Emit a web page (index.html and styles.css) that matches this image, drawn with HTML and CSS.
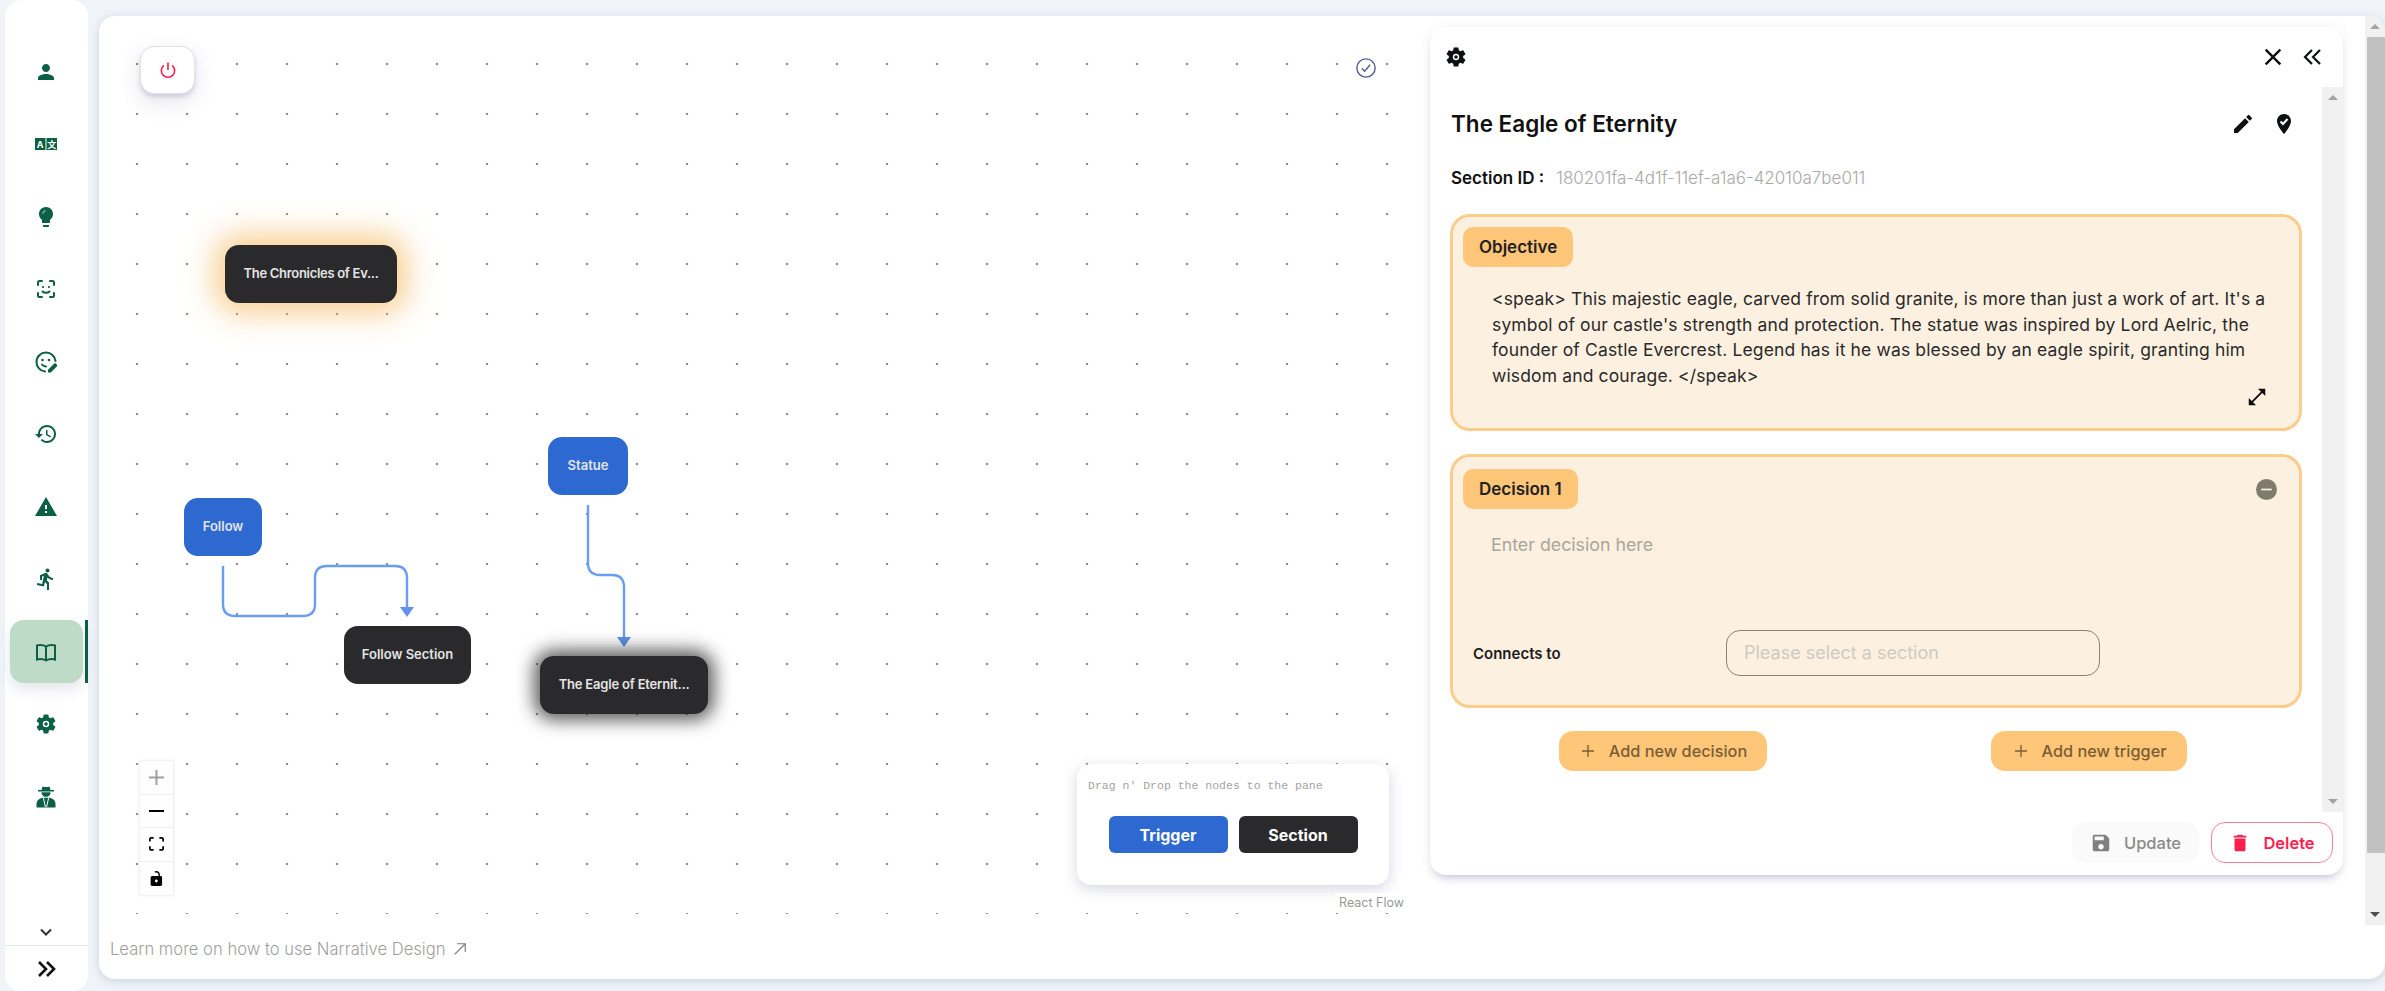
FILE: index.html
```html
<!DOCTYPE html>
<html lang="en">

<head>
  <meta charset="UTF-8">
  <title>Narrative Design</title>
  <link rel="stylesheet" href="styles.css">
</head>

<body>
  <aside class="sidebar">
    <nav class="side-nav">
      <a class="side-item"><svg viewBox="0 0 24 24"><path d="M12 12c2.21 0 4-1.79 4-4s-1.79-4-4-4-4 1.790-4 4 1.790 4 4 4zm0 2c-2.670 0-8 1.340-8 4v2h16v-2c0-2.660-5.330-4-8-4z"/></svg></a>
      <a class="side-item"><svg viewBox="0 0 24 24"><rect x="1" y="6" width="10.500" height="12"/><rect x="12.500" y="6" width="10.500" height="12"/><text class="mini-a" x="6.200" y="15.500">A</text><text class="mini-b" x="17.700" y="15.500">文</text></svg></a>
      <a class="side-item"><svg viewBox="0 0 24 24"><path d="M9 21c0 .55.45 1 1 1h4c.55 0 1-.45 1-1v-1H9v1zm3-19C8.140 2 5 5.140 5 9c0 2.380 1.190 4.470 3 5.740V17c0 .55.45 1 1 1h6c.55 0 1-.45 1-1v-2.260c1.810-1.270 3-3.360 3-5.740 0-3.860-3.140-7-7-7z"/><path class="hole-line" d="M9 8c.3-1.200 1-1.900 2-2.300"/></svg></a>
      <a class="side-item"><svg viewBox="0 0 24 24"><path class="line" d="M8 4H5.500C4.700 4 4 4.700 4 5.500V8M16 4h2.500c.8 0 1.500.7 1.500 1.500V8M4 16v2.500c0 .8.7 1.500 1.500 1.500H8M20 16v2.500c0 .8-.7 1.500-1.500 1.500H16M8.500 14.500c1.800 1.800 5.200 1.800 7 0"/><circle cx="9" cy="10" r="1.100"/><circle cx="15" cy="10" r="1.100"/></svg></a>
      <a class="side-item"><svg viewBox="0 0 24 24"><path class="line" d="M11 21.500C6 21 2.500 17 2.500 12c0-5.300 4.300-9.500 9.500-9.500 5 0 9 3.700 9.500 8.500"/><circle cx="8.500" cy="10" r="1.300"/><circle cx="15" cy="10" r="1.300"/><path class="line" d="M8 14.500c1 1.300 2.300 2 4 2"/><path d="M14 22.500v-2.800l6-6c.6-.6 1.500-.6 2 0l.8.8c.6.6.6 1.400 0 2l-6 6z"/></svg></a>
      <a class="side-item"><svg viewBox="0 0 24 24"><path d="M13 3c-4.970 0-9 4.030-9 9H1l3.890 3.890.07.14L9 12H6c0-3.870 3.130-7 7-7s7 3.130 7 7-3.130 7-7 7c-1.930 0-3.680-.79-4.940-2.060l-1.420 1.420C8.270 19.990 10.510 21 13 21c4.970 0 9-4.030 9-9s-4.030-9-9-9zm-1 5v5l4.280 2.540.72-1.210-3.500-2.080V8H12z"/></svg></a>
      <a class="side-item"><svg viewBox="0 0 24 24"><path d="M1 21h22L12 2 1 21zm12-3h-2v-2h2v2zm0-4h-2v-4h2v4z"/></svg></a>
      <a class="side-item"><svg viewBox="0 0 24 24"><path d="M13.490 5.480c1.100 0 2-.9 2-2s-.9-2-2-2-2 .9-2 2 .9 2 2 2zm-3.600 13.900l1-4.400 2.100 2v6h2v-7.500l-2.100-2 .6-3c1.300 1.500 3.300 2.500 5.500 2.500v-2c-1.900 0-3.500-1-4.300-2.400l-1-1.600c-.4-.6-1-1-1.700-1-.3 0-.5.1-.8.1l-5.200 2.200v4.700h2v-3.400l1.800-.7-1.600 8.100-4.900-1-.4 2 7 1.400z"/></svg></a>
      <a class="side-item active"><svg viewBox="0 0 24 24"><path class="line" d="M12 6.500C10.500 5.300 8.400 5 6 5c-1.100 0-2.200.1-3 .4v14.100c.9-.3 2-.5 3-.5 2.300 0 4.500.4 6 1.500 1.500-1.100 3.700-1.500 6-1.500 1 0 2.100.2 3 .5V5.400C20.200 5.100 19.100 5 18 5c-2.400 0-4.500.3-6 1.500zM12 6.500v14"/></svg></a>
      <a class="side-item"><svg viewBox="0 0 24 24"><path d="M19.140 12.940c.04-.3.06-.61.06-.94 0-.32-.02-.64-.07-.94l2.030-1.580c.18-.14.23-.41.12-.61l-1.920-3.320c-.12-.22-.37-.29-.59-.22l-2.390.96c-.5-.38-1.030-.7-1.620-.94l-.36-2.540c-.04-.24-.24-.41-.48-.41h-3.840c-.24 0-.43.17-.47.41l-.36 2.540c-.59.24-1.130.57-1.620.94l-2.390-.96c-.22-.08-.47 0-.59.22L2.740 8.870c-.12.21-.08.47.12.61l2.030 1.580c-.05.3-.09.63-.09.94s.02.64.07.94l-2.030 1.580c-.18.14-.23.41-.12.61l1.920 3.320c.12.22.37.29.59.22l2.390-.96c.5.38 1.030.7 1.620.94l.36 2.540c.05.24.24.41.48.41h3.840c.24 0 .44-.17.47-.41l.36-2.540c.59-.24 1.130-.56 1.620-.94l2.390.96c.22.08.47 0 .59-.22l1.920-3.320c.12-.22.07-.47-.12-.61l-2.010-1.580z"/><circle class="hole" cx="12" cy="12" r="3.200"/><circle cx="12" cy="12" r="1.800"/></svg></a>
      <a class="side-item"><svg viewBox="0 0 24 24"><path d="M8.500 1.500c1 .4 2.200.6 3.500.6s2.500-.2 3.500-.6l1 3.500H20v1.400H4V5h3.500z"/><path d="M7.500 7.300h9c.1 2.400-1.700 4.500-4.500 4.500s-4.600-2.100-4.500-4.500z"/><path d="M2.500 22.500v-3.500c0-3 2.200-5.200 5.500-6.200h8c3.300 1 5.500 3.200 5.500 6.200v3.500z"/><path class="hole-line" d="M9.500 13.500l1.800 8M14.500 13.500l-1.800 8"/></svg></a>
    </nav>
    <div class="side-more"><svg viewBox="0 0 24 24"><path d="M6 9l6 6 6-6"/></svg></div>
    <div class="side-expand"><svg viewBox="0 0 24 24"><path d="M5 5l7 7-7 7M13 5l7 7-7 7"/></svg></div>
  </aside>

  <main class="main-card">
    <div class="main-content">
      <div class="work-row">
        <section class="canvas">
          <button class="power-btn"><svg viewBox="0 0 24 24"><path d="M12 3v9M7 6.500a8 8 0 1 0 10 0"/></svg></button>
          <svg class="status-icon" viewBox="0 0 24 24"><circle cx="12" cy="12" r="10"/><path d="M7.500 12.500l3 3 6-7"/></svg>

          <svg class="edges" viewBox="0 0 1331 898">
            <path d="M124 550v38q0 12 12 12h68q12 0 12-12v-26q0-12 12-12h68q12 0 12 12v30"/>
            <path d="M489 489v58q0 12 12 12h12q12 0 12 12v57"/>
            <polygon points="301,591 315,591 308,601"/>
            <polygon points="518,621 532,621 525,631"/>
          </svg>

          <div class="node dark glow-orange node-chronicles">The Chronicles of Ev...</div>
          <div class="node blue node-statue">Statue</div>
          <div class="node blue node-follow">Follow</div>
          <div class="node dark node-section">Follow Section</div>
          <div class="node dark glow-black node-eagle">The Eagle of Eternit...</div>

          <div class="controls">
            <button class="ctrl-btn"><svg class="ctrl-plus" viewBox="0 0 32 32"><path d="M32 18.100H18.100V32h-4.300V18.100H0v-4.300h13.800V0h4.300v13.800H32z"/></svg></button>
            <button class="ctrl-btn"><svg viewBox="0 0 32 5"><path d="M0 0h32v4.200H0z"/></svg></button>
            <button class="ctrl-btn"><svg viewBox="0 0 32 30"><path d="M3.692 4.630c0-.53.4-.938.939-.938h5.215V0H4.708C2.130 0 0 2.054 0 4.630v5.216h3.692V4.631zM27.354 0h-5.200v3.692h5.170c.53 0 .984.4.984.939v5.215H32V4.631A4.624 4.624 0 0027.354 0zm.954 24.830c0 .532-.4.940-.939.940h-5.215v3.768h5.215c2.577 0 4.631-2.130 4.631-4.707v-5.139h-3.692v5.139zm-23.677.940c-.531 0-.939-.4-.939-.940v-5.138H0v5.139c0 2.577 2.130 4.707 4.708 4.707h5.138V25.770H4.631z"/></svg></button>
            <button class="ctrl-btn"><svg viewBox="0 0 25 32"><path d="M21.333 10.667H19.810V7.619C19.810 3.429 16.380 0 12.190 0c-1.500 0-3 .4-4.200 1.300l1.600 2.500c.8-.5 1.700-.8 2.600-.8 2.514 0 4.572 2.057 4.572 4.571v3.048H3.048C1.370 10.667 0 12.038 0 13.714v15.238C0 30.629 1.371 32 3.048 32h18.285c1.676 0 3.048-1.371 3.048-3.048V13.714c0-1.676-1.372-3.047-3.048-3.047zM12.190 24.381c-1.677 0-3.047-1.371-3.047-3.048 0-1.676 1.370-3.047 3.047-3.047 1.677 0 3.048 1.371 3.048 3.047 0 1.677-1.371 3.048-3.048 3.048z"/></svg></button>
          </div>

          <div class="legend">
            <p class="legend-hint">Drag n' Drop the nodes to the pane</p>
            <div class="legend-btns">
              <button class="legend-btn trigger">Trigger</button>
              <button class="legend-btn section">Section</button>
            </div>
          </div>
          <div class="attribution">React Flow</div>
        </section>

        <section class="panel">
          <header class="panel-head">
            <svg class="icon" viewBox="0 0 24 24"><path d="M19.140 12.940c.04-.3.06-.61.06-.94 0-.32-.02-.64-.07-.94l2.030-1.580c.18-.14.23-.41.12-.61l-1.920-3.320c-.12-.22-.37-.29-.59-.22l-2.390.96c-.5-.38-1.030-.7-1.620-.94l-.36-2.540c-.04-.24-.24-.41-.48-.41h-3.840c-.24 0-.43.17-.47.41l-.36 2.540c-.59.24-1.130.57-1.620.94l-2.390-.96c-.22-.08-.47 0-.59.22L2.740 8.870c-.12.21-.08.47.12.61l2.030 1.580c-.05.3-.09.63-.09.94s.02.64.07.94l-2.030 1.580c-.18.14-.23.41-.12.61l1.920 3.320c.12.22.37.29.59.22l2.390-.96c.5.38 1.030.7 1.620.94l.36 2.540c.05.24.24.41.48.41h3.840c.24 0 .44-.17.47-.41l.36-2.540c.59-.24 1.130-.56 1.620-.94l2.390.96c.22.08.47 0 .59-.22l1.920-3.320c.12-.22.07-.47-.12-.61l-2.010-1.580z"/><circle class="hole" cx="12" cy="12" r="3.200"/><circle cx="12" cy="12" r="1.800"/></svg>
            <div class="head-actions">
              <svg class="icon close" viewBox="0 0 24 24"><path d="M19 6.410L17.590 5 12 10.590 6.410 5 5 6.410 10.590 12 5 17.590 6.410 19 12 13.410 17.590 19 19 17.590 13.410 12 19 6.410z"/></svg>
              <svg class="icon stroke" viewBox="0 0 24 24"><path d="M12 5l-7 7 7 7M20 5l-7 7 7 7"/></svg>
            </div>
          </header>

          <div class="panel-scroll">
            <div class="panel-body">
              <div class="title-row">
                <h2 class="title">The Eagle of Eternity</h2>
                <div class="title-actions">
                  <svg class="icon" viewBox="0 0 24 24"><path d="M3 17.250V21h3.750L17.810 9.940l-3.750-3.750L3 17.250zM20.710 7.040c.39-.39.39-1.020 0-1.410l-2.340-2.340c-.39-.39-1.020-.39-1.410 0l-1.830 1.830 3.750 3.750 1.830-1.830z"/></svg>
                  <svg class="icon" viewBox="0 0 24 24"><path d="M12 2C8.100 2 5 5.100 5 9c0 5.200 7 13 7 13s7-7.800 7-13c0-3.900-3.100-7-7-7z"/><path class="hole-line" d="M8.500 9.500l2.500 2.500 4.500-5"/></svg>
                </div>
              </div>
              <div class="section-id"><strong>Section ID :</strong><span>180201fa-4d1f-11ef-a1a6-42010a7be011</span></div>

              <div class="box box-objective">
                <div class="chip">Objective</div>
                <p class="box-text">&lt;speak&gt; This majestic eagle, carved from solid granite, is more than just a work of art. It's a symbol of our castle's strength and protection. The statue was inspired by Lord Aelric, the founder of Castle Evercrest. Legend has it he was blessed by an eagle spirit, granting him wisdom and courage. &lt;/speak&gt;</p>
                <svg class="icon expand" viewBox="0 0 24 24"><path d="M21 11V3h-8l3.290 3.290-10 10L3 13v8h8l-3.290-3.290 10-10z"/></svg>
              </div>

              <div class="box box-decision">
                <div class="chip-row">
                  <div class="chip">Decision 1</div>
                  <svg class="remove" viewBox="0 0 24 24"><circle cx="12" cy="12" r="12"/><path d="M6 12h12"/></svg>
                </div>
                <p class="decision-ph">Enter decision here</p>
                <div class="connect-row">
                  <label class="connect-label">Connects to</label>
                  <div class="connect-input">Please select a section</div>
                </div>
              </div>

              <div class="add-row">
                <button class="add-btn decision-btn"><svg viewBox="0 0 24 24"><path d="M12 4v16M4 12h16"/></svg>Add new decision</button>
                <button class="add-btn trigger-btn"><svg viewBox="0 0 24 24"><path d="M12 4v16M4 12h16"/></svg>Add new trigger</button>
              </div>
            </div>
            <div class="bar bar-inner"><i class="arrow up"></i><i class="arrow down"></i></div>
          </div>

          <footer class="panel-foot">
            <button class="foot-btn update"><svg viewBox="0 0 24 24"><path d="M17 3H5c-1.110 0-2 .9-2 2v14c0 1.100.89 2 2 2h14c1.100 0 2-.9 2-2V7l-4-4zm-5 16c-1.660 0-3-1.340-3-3s1.340-3 3-3 3 1.340 3 3-1.340 3-3 3zm3-10H5V5h10v4z"/></svg>Update</button>
            <button class="foot-btn delete"><svg viewBox="0 0 24 24"><path d="M6 19c0 1.100.9 2 2 2h8c1.100 0 2-.9 2-2V7H6v12zM19 4h-3.500l-1-1h-5l-1 1H5v2h14V4z"/></svg>Delete</button>
          </footer>
        </section>
      </div>

      <a class="learn-link">Learn more on how to use Narrative Design <svg viewBox="0 0 24 24"><path d="M5 19L19 5M8 5h11v11"/></svg></a>
    </div>

    <div class="bar bar-page"><i class="arrow up"></i><div class="thumb"></div><i class="arrow down dark"></i></div>
  </main>
</body>

</html>
```
FILE: styles.css
```css
* {
  box-sizing: border-box;
}

html,
body {
  margin: 0;
  height: 991px;
  overflow: hidden;
}

body {
  display: flex;
  padding-left: 5px;
  background-color: #f0f4f9;
  font-family: "Inter", "Noto Sans", sans-serif;
  color: #111;
}

button {
  font-family: inherit;
  border: none;
  cursor: pointer;
}

/* sidebar */
.sidebar {
  width: 83px;
  height: 991px;
  margin-right: 11px;
  flex: none;
  display: flex;
  flex-direction: column;
  background-color: #fff;
  border-radius: 16px;
}

.side-nav {
  flex: 1;
  padding-top: 40px;
  display: flex;
  flex-direction: column;
}

.side-item {
  height: 63px;
  margin: 0 5px 9.500px;
  padding-right: 1px;
  display: flex;
  align-items: center;
  justify-content: center;
  position: relative;
  border-radius: 14px;
}

.side-item svg {
  width: 24px;
  height: 24px;
  fill: #0a5f45;
}

.side-item .line {
  fill: none;
  stroke: #0a5f45;
  stroke-width: 2;
  stroke-linecap: round;
}

.side-item .hole-line {
  fill: none;
  stroke: #fff;
  stroke-width: 1;
  stroke-linecap: round;
}

.side-item .hole {
  fill: #fff;
}

.mini-a,
.mini-b {
  fill: #fff;
  font-size: 9px;
  font-weight: 700;
  text-anchor: middle;
}

.mini-b {
  font-family: "Noto Sans CJK SC", sans-serif;
}

.side-item.active {
  background-color: #bedbc7;
  box-shadow: 0 6px 14px rgba(60, 70, 110, 0.14);
}

.side-item.active::after {
  content: '';
  position: absolute;
  top: 0;
  bottom: 0;
  right: -5px;
  width: 3px;
  background-color: #0a5f45;
}

.side-more {
  height: 27px;
  display: flex;
  justify-content: center;
  align-items: center;
  padding-right: 1px;
}

.side-more svg {
  width: 20px;
  height: 20px;
  fill: none;
  stroke: #333;
  stroke-width: 2.500;
}

.side-expand {
  height: 46px;
  padding-right: 2px;
  display: flex;
  justify-content: center;
  align-items: center;
  border-top: 1px solid #e6e6e6;
}

.side-expand svg {
  width: 24px;
  height: 24px;
  fill: none;
  stroke: #111;
  stroke-width: 2.600;
}

/* main card */
.main-card {
  flex: 1;
  height: 963px;
  margin-top: 16px;
  display: flex;
  align-items: flex-start;
  background-color: #fff;
  border-radius: 16px;
  box-shadow: 0 2px 8px rgba(70, 80, 130, 0.22);
  overflow: hidden;
}

.main-content {
  flex: 1;
  min-width: 0;
}

.work-row {
  display: flex;
  height: 898px;
}

.canvas {
  width: 1331px;
  height: 898px;
  flex: none;
  position: relative;
  background-image: radial-gradient(circle at center, #8e8e93 1.300px, transparent 1.600px);
  background-size: 50px 50px;
  background-position: 13px 23px;
}

.power-btn {
  position: absolute;
  left: 41px;
  top: 30px;
  width: 55px;
  height: 48px;
  display: flex;
  align-items: center;
  justify-content: center;
  background-color: #fff;
  border: 1px solid #e2e2e8;
  border-radius: 14px;
  box-shadow: 0 3px 4px rgba(70, 70, 130, 0.18), 0 8px 22px rgba(70, 70, 130, 0.14);
}

.power-btn svg {
  width: 20px;
  height: 20px;
  fill: none;
  stroke: #ff1e50;
  stroke-width: 2;
}

.status-icon {
  position: absolute;
  left: 1256px;
  top: 41px;
  width: 22px;
  height: 22px;
  fill: none;
  stroke: #4f5a8f;
  stroke-width: 1.500;
}

.edges {
  position: absolute;
  left: 0;
  top: 0;
  width: 1331px;
  height: 898px;
  fill: none;
  stroke: #6a9cf0;
  stroke-width: 2.400;
}

.edges polygon {
  fill: #5f92e8;
  stroke: none;
}

.node {
  position: absolute;
  display: flex;
  align-items: center;
  justify-content: center;
  height: 58px;
  padding-bottom: 2px;
  border-radius: 14px;
  color: #e4e4e4;
  font-size: 13px;
  font-weight: 600;
}

.node.dark {
  background-color: #2a2a2c;
}

.node.blue {
  background-color: #2d69d1;
}

.glow-orange {
  box-shadow: 0 0 30px 10px rgba(245, 185, 95, 0.7);
}

.glow-black {
  box-shadow: 0 0 18px 6px rgba(0, 0, 0, 0.65);
}

.node-chronicles {
  left: 126px;
  top: 229px;
  width: 172px;
  letter-spacing: -0.3px;
}

.node-statue {
  left: 449px;
  top: 421px;
  width: 80px;
}

.node-follow {
  left: 85px;
  top: 482px;
  width: 78px;
}

.node-section {
  left: 245px;
  top: 610px;
  width: 127px;
}

.node-eagle {
  left: 441px;
  top: 640px;
  width: 168px;
  letter-spacing: -0.2px;
}

.controls {
  position: absolute;
  left: 41px;
  top: 745px;
  width: 33px;
  box-shadow: 0 0 2px 1px rgba(0, 0, 0, 0.08);
}

.ctrl-btn {
  display: flex;
  align-items: center;
  justify-content: center;
  width: 33px;
  height: 33.500px;
  padding: 0;
  background-color: #fefefe;
  border-bottom: 1px solid #eee;
}

.ctrl-btn:last-child {
  border-bottom: none;
}

.ctrl-btn svg {
  width: 15px;
  max-height: 15px;
  fill: #000;
}

.ctrl-btn .ctrl-plus {
  fill: #a0a0a0;
}

.legend {
  position: absolute;
  left: 978px;
  top: 748px;
  width: 312px;
  height: 121px;
  padding: 13px 11px;
  background-color: #fff;
  border-radius: 14px;
  box-shadow: 0 4px 14px rgba(70, 70, 130, 0.22);
}

.legend-hint {
  margin: 0;
  font-family: "Liberation Mono", monospace;
  font-size: 11.500px;
  line-height: 18px;
  color: #a3a3a3;
}

.legend-btns {
  margin-top: 21px;
  display: flex;
  justify-content: center;
  gap: 11px;
}

.legend-btn {
  width: 119px;
  height: 37px;
  border-radius: 6px;
  color: #fff;
  font-size: 16px;
  font-weight: 700;
}

.legend-btn.trigger {
  background-color: #2d69d1;
}

.legend-btn.section {
  background-color: #2a2a2c;
}

.attribution {
  position: absolute;
  right: 22px;
  top: 877px;
  padding: 2px 4px;
  background-color: rgba(255, 255, 255, 0.8);
  font-size: 12.500px;
  color: #999;
}

/* right panel */
.panel {
  width: 913px;
  height: 848px;
  margin-top: 11px;
  flex: none;
  display: flex;
  flex-direction: column;
  background-color: #fff;
  border-radius: 16px;
  box-shadow: 0 6px 10px -4px rgba(70, 70, 130, 0.32), 0 0 14px rgba(70, 70, 130, 0.06);
  overflow: hidden;
}

.panel-head {
  height: 60px;
  flex: none;
  padding: 0 19px 0 14px;
  display: flex;
  align-items: center;
  justify-content: space-between;
}

.head-actions {
  display: flex;
  align-items: center;
  gap: 13px;
}

.icon {
  width: 24px;
  height: 24px;
  display: block;
  fill: #0d0f10;
}

.icon .hole,
.icon .hole-line {
  fill: #fff;
}

.icon .hole-line {
  fill: none;
  stroke: #fff;
  stroke-width: 2;
}

.icon.close {
  width: 28px;
  height: 28px;
}

.icon.stroke {
  fill: none;
  stroke: #0d0f10;
  stroke-width: 2.200;
}

.panel-scroll {
  flex: 1;
  min-height: 0;
  display: flex;
}

.panel-body {
  flex: 1;
  padding: 0 20px;
}

.title-row {
  height: 73px;
  padding: 0 0 0 1px;
  display: flex;
  align-items: center;
  justify-content: space-between;
}

.title {
  margin: 0;
  font-size: 22.500px;
  font-weight: 600;
}

.title-actions {
  display: flex;
  gap: 17px;
  padding-right: 6px;
}

.section-id {
  height: 36px;
  padding-left: 1px;
  display: flex;
  align-items: center;
  gap: 12px;
  font-size: 17px;
}

.section-id strong {
  font-weight: 600;
}

.section-id span {
  color: #a8a8a8;
  font-weight: 300;
}

.box {
  position: relative;
  margin-top: 18px;
  background-color: #fcf0e0;
  border: 3px solid #fbcd8d;
  border-radius: 20px;
}

.box-objective {
  height: 217px;
  padding: 10px;
}

.box-decision {
  height: 254px;
  margin-top: 23px;
  padding: 12px 10px;
}

.chip {
  display: inline-block;
  height: 40px;
  padding: 0 16px;
  background-color: #fec679;
  border-radius: 10px;
  font-size: 17px;
  font-weight: 600;
  line-height: 40px;
  color: #222;
}

.box-text {
  margin: 19px 0 0 29px;
  width: 790px;
  font-size: 17.500px;
  letter-spacing: 0.140px;
  line-height: 25.600px;
  color: #2a2a2a;
}

.expand {
  position: absolute;
  right: 31px;
  bottom: 20px;
  width: 22px;
  height: 22px;
}

.chip-row {
  display: flex;
  align-items: center;
  justify-content: space-between;
  padding-right: 12px;
}

.remove {
  width: 21px;
  height: 21px;
  fill: #7f7c6e;
  stroke: #fcf0e0;
  stroke-width: 2;
}

.remove circle {
  stroke: none;
}

.decision-ph {
  margin: 25px 0 0 28px;
  font-size: 17.800px;
  line-height: 22px;
  color: #aaa69c;
}

.connect-row {
  margin-top: 74px;
  padding-left: 10px;
  display: flex;
  align-items: center;
}

.connect-label {
  width: 253px;
  font-size: 15px;
  font-weight: 600;
  color: #1c1c1c;
}

.connect-input {
  width: 374px;
  height: 46px;
  padding-left: 17px;
  border: 1px solid #86837c;
  border-radius: 14px;
  font-size: 18px;
  line-height: 44px;
  color: #cfcbc2;
}

.add-row {
  margin-top: 23px;
  display: flex;
}

.add-btn {
  height: 40px;
  display: flex;
  align-items: center;
  justify-content: center;
  gap: 12px;
  background-color: #fec679;
  border-radius: 14px;
  font-size: 16.300px;
  font-weight: 500;
  color: #7a5e32;
}

.add-btn svg {
  width: 18px;
  height: 18px;
  fill: none;
  stroke: #7a5e32;
  stroke-width: 1.800;
}

.decision-btn {
  width: 208px;
  margin-left: 109px;
}

.trigger-btn {
  width: 196px;
  margin-left: 224px;
}

.panel-foot {
  height: 63px;
  flex: none;
  padding: 10px 10px 0 0;
  display: flex;
  justify-content: flex-end;
  gap: 12px;
}

.foot-btn {
  width: 127px;
  height: 41px;
  display: flex;
  align-items: center;
  justify-content: center;
  gap: 12px;
  border-radius: 14px;
  font-size: 16.500px;
  font-weight: 500;
}

.foot-btn svg {
  width: 22px;
  height: 22px;
}

.foot-btn.update {
  background-color: #fafafa;
  color: #8a8a8a;
}

.foot-btn.update svg {
  fill: #808080;
}

.foot-btn.delete {
  width: 122px;
  background-color: #fff;
  border: 1px solid #ff7d96;
  color: #ff1e50;
  font-weight: 600;
}

.foot-btn.delete svg {
  fill: #ff1e50;
}

.learn-link {
  display: flex;
  align-items: center;
  gap: 5px;
  margin: 24px 0 0 11px;
  font-size: 16.600px;
  font-weight: 300;
  line-height: 22px;
  color: #9f9f9f;
}

.learn-link svg {
  width: 18px;
  height: 18px;
  fill: none;
  stroke: #808080;
  stroke-width: 1.600;
}

/* scrollbars */
.bar {
  position: relative;
  flex: none;
  background-color: #f1f1f1;
}

.bar-inner {
  width: 21px;
}

.bar-page {
  width: 20px;
  height: 909px;
}

.thumb {
  position: absolute;
  top: 21px;
  left: 2px;
  right: 0;
  height: 816px;
  background-color: #c1c1c1;
}

.arrow {
  position: absolute;
  left: 50%;
  margin-left: -5px;
  width: 0;
  height: 0;
  border-left: 5px solid transparent;
  border-right: 5px solid transparent;
}

.arrow.up {
  top: 8px;
  border-bottom: 5px solid #a3a3a3;
}

.arrow.down {
  bottom: 8px;
  border-top: 5px solid #a3a3a3;
}

.arrow.down.dark {
  border-top-color: #505050;
}
```
